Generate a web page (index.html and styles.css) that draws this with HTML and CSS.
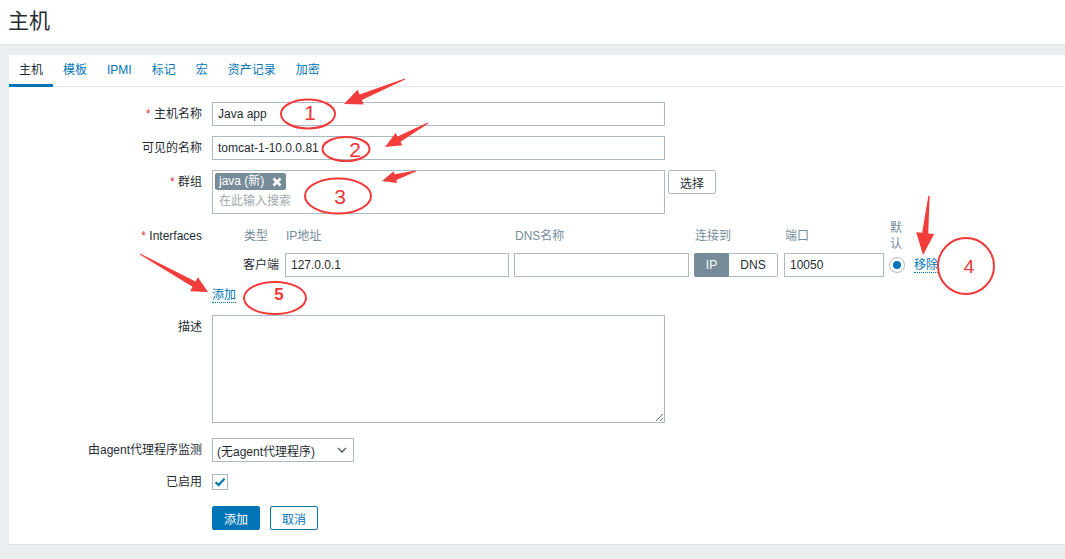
FILE: index.html
```html
<!DOCTYPE html>
<html lang="zh">
<head>
<meta charset="utf-8">
<title>主机</title>
<link rel="stylesheet" href="styles.css">
</head>
<body>
<header class="page-header"><h1 class="page-title">主机</h1></header>
<main class="panel">
  <nav class="tabs">
    <a class="tab tab-active">主机</a>
    <a class="tab">模板</a>
    <a class="tab">IPMI</a>
    <a class="tab">标记</a>
    <a class="tab">宏</a>
    <a class="tab">资产记录</a>
    <a class="tab">加密</a>
  </nav>
  <form class="form">
    <div class="row">
      <label class="label"><span class="req">*</span> 主机名称</label>
      <div class="field"><input class="input input-wide" type="text" value="Java app"></div>
    </div>
    <div class="row row-gap10">
      <label class="label">可见的名称</label>
      <div class="field"><input class="input input-wide" type="text" value="tomcat-1-10.0.0.81"></div>
    </div>
    <div class="row row-gap10">
      <label class="label"><span class="req">*</span> 群组</label>
      <div class="field field-inline">
        <div class="multiselect">
          <span class="tag">java (新)
            <svg class="tag-x" width="10" height="10" viewBox="0 0 10 10"><path d="M1.5 1.5 L8.5 8.5 M8.5 1.5 L1.5 8.5" stroke="#fff" stroke-width="2.6" stroke-linecap="butt"/></svg>
          </span>
          <div class="ms-placeholder">在此输入搜索</div>
        </div>
        <button type="button" class="btn-grey">选择</button>
      </div>
    </div>
    <div class="row row-iface">
      <label class="label label-iface"><span class="req">*</span> Interfaces</label>
      <div class="field">
        <div class="iface">
          <div class="iface-head">类型</div>
          <div class="iface-head">IP地址</div>
          <div class="iface-head">DNS名称</div>
          <div class="iface-head">连接到</div>
          <div class="iface-head">端口</div>
          <div class="iface-head iface-head-default">默认</div>
          <div class="iface-head"></div>

          <div class="iface-type">客户端</div>
          <div><input class="input input-ip" type="text" value="127.0.0.1"></div>
          <div><input class="input input-dns" type="text" value=""></div>
          <div class="toggle"><span class="toggle-ip">IP</span><span class="toggle-dns">DNS</span></div>
          <div><input class="input input-port" type="text" value="10050"></div>
          <div class="radio"><span class="radio-dot"></span></div>
          <div><a class="link link-remove">移除</a></div>
        </div>
      </div>
    </div>
    <div class="row row-add">
      <div class="label"></div>
      <div class="field"><a class="link link-add">添加</a></div>
    </div>
    <div class="row row-desc">
      <label class="label">描述</label>
      <div class="field"><textarea class="textarea"></textarea></div>
    </div>
    <div class="row row-select">
      <label class="label">由agent代理程序监测</label>
      <div class="field">
        <div class="select"><span>(无agent代理程序)</span>
          <svg width="10" height="6" viewBox="0 0 10 6"><path d="M1 1 L5 5 L9 1" fill="none" stroke="#4f5b61" stroke-width="1.3"/></svg>
        </div>
      </div>
    </div>
    <div class="row row-check">
      <label class="label label-check">已启用</label>
      <div class="field">
        <div class="checkbox"><svg width="14" height="14" viewBox="0 0 14 14"><path d="M2.5 7.2 L5.6 10 L11.5 3.8" fill="none" stroke="#0275b8" stroke-width="2.2"/></svg></div>
      </div>
    </div>
    <div class="row row-buttons">
      <div class="label"></div>
      <div class="field field-inline">
        <button type="button" class="btn-primary">添加</button>
        <button type="button" class="btn-secondary">取消</button>
      </div>
    </div>
  </form>
</main>

<svg class="annotations" width="1065" height="559" viewBox="0 0 1065 559">
  <g fill="#f33c3c">
    <polygon points="405.2,79.5 361.8,99.9 363.7,104.6 344,104 357.6,89.8 359.5,94.4 404.8,78.5"/>
    <polygon points="428.2,123.4 400.5,141.8 402.4,145.3 385,147 395.6,133.1 397.5,136.6 427.8,122.6"/>
    <polygon points="416.1,171.5 396.3,180 397.1,182.9 382,181 393.7,171.3 394.6,174.2 415.9,170.5"/>
    <polygon points="929.7,196.1 928.2,233.4 934.2,234 923,255 916.2,232.2 922.2,232.8 928.3,195.9"/>
    <polygon points="139.8,254.4 192.5,286.8 190.1,291.2 208,292 197.9,277.2 195.5,281.6 140.2,253.6"/>
  </g>
  <g fill="none" stroke="#f23a3a" stroke-width="2">
    <ellipse cx="308" cy="114" rx="27" ry="14.5"/>
    <ellipse cx="346" cy="149" rx="23.5" ry="12"/>
    <ellipse cx="338" cy="196" rx="33" ry="17.5"/>
    <circle cx="966" cy="266" r="28"/>
    <ellipse cx="275" cy="298" rx="31" ry="16"/>
  </g>
  <g class="anno-num" fill="#ef3535" text-anchor="middle">
    <text x="310" y="120" font-size="21">1</text>
    <text x="355" y="157" font-size="21">2</text>
    <text x="340" y="204" font-size="21">3</text>
    <text x="969" y="273" font-size="19">4</text>
    <text x="279" y="300" font-size="17" font-weight="bold">5</text>
  </g>
</svg>
</body>
</html>
```

FILE: styles.css
```css
html, body {
  margin: 0;
  padding: 0;
}
body {
  background: #ebeef0;
  font-family: "Liberation Sans", Arial, "Noto Sans CJK SC", sans-serif;
  font-size: 12px;
  color: #1f2c33;
  width: 1065px;
  height: 559px;
  overflow: hidden;
  position: relative;
}

.page-header {
  background: #fff;
  height: 44px;
  border-bottom: 1px solid #dfe4e7;
  padding-left: 8px;
}
.page-title {
  margin: 0;
  font-size: 21px;
  font-weight: normal;
  line-height: 42px;
  color: #1f2c33;
}

.panel {
  margin: 10px 0 0 9px;
  background: #fff;
  border-bottom: 1px solid #dfe4e7;
}

.tabs {
  display: flex;
  height: 31px;
  border-bottom: 1px solid #e6e9eb;
}
.tab {
  display: block;
  height: 32px;
  box-sizing: border-box;
  margin-bottom: -1px;
  padding: 0 10px;
  line-height: 31px;
  color: #0275b8;
  text-decoration: none;
  cursor: pointer;
}
.tab-active {
  color: #1f2c33;
  box-shadow: inset 0 -3px 0 #0275b8;
}

.form {
  padding: 15px 0 14px 0;
}
.row {
  display: grid;
  grid-template-columns: 193px 1fr;
  column-gap: 10px;
}
.row-gap10 { margin-top: 10px; }
.row-iface { margin-top: 6px; }
.row-add { margin-top: 11px; }
.row-desc { margin-top: 12px; }
.row-select { margin-top: 15px; }
.row-check { margin-top: 12px; }
.row-buttons { margin-top: 16px; }

.label {
  text-align: right;
  line-height: 24px;
  white-space: nowrap;
}
.label-iface {
  line-height: 16px;
  padding-top: 8px;
}
.label-check {
  line-height: 16px;
}
.req {
  color: #e33734;
}

.field-inline {
  display: flex;
  align-items: flex-start;
}

.input {
  display: block;
  box-sizing: border-box;
  height: 24px;
  margin: 0;
  border: 1px solid #acbbc2;
  border-radius: 0;
  padding: 0 5px;
  font: inherit;
  color: #1f2c33;
  background: #fff;
  outline: none;
}
.input-wide { width: 453px; }
.input-ip { width: 224px; }
.input-dns { width: 175px; }
.input-port { width: 100px; }

.multiselect {
  box-sizing: border-box;
  width: 453px;
  height: 44px;
  border: 1px solid #acbbc2;
  padding: 2px;
}
.tag {
  display: inline-flex;
  align-items: center;
  gap: 8px;
  height: 17px;
  padding: 0 4px;
  background: #768d99;
  color: #fff;
  border-radius: 2px;
  line-height: 17px;
}
.tag-x {
  display: block;
}
.ms-placeholder {
  padding-left: 4px;
  margin-top: 2px;
  line-height: 18px;
  color: #9ea8ad;
}

.btn-grey {
  margin-left: 3px;
  height: 24px;
  padding: 0 11px;
  background: #fff;
  border: 1px solid #acbbc2;
  border-radius: 2px;
  font: inherit;
  color: #1f2c33;
}

.iface {
  display: grid;
  grid-template-columns: 37px 224px 175px 85px 100px 16px auto;
  column-gap: 5px;
  row-gap: 1px;
  align-items: center;
  padding-left: 31px;
  width: max-content;
}
.iface-head {
  color: #768d99;
  line-height: 16px;
  padding-left: 1px;
}
.iface-head-default {
  width: 16px;
}
.iface-type {
  line-height: 24px;
  white-space: nowrap;
}
.toggle {
  display: flex;
  height: 24px;
}
.toggle-ip, .toggle-dns {
  box-sizing: border-box;
  height: 24px;
  line-height: 22px;
  text-align: center;
}
.toggle-ip {
  width: 35px;
  background: #768d99;
  border: 1px solid #768d99;
  color: #fff;
  border-radius: 2px 0 0 2px;
}
.toggle-dns {
  width: 49px;
  border: 1px solid #acbbc2;
  border-left: none;
  background: #fff;
  color: #1f2c33;
  border-radius: 0 2px 2px 0;
}
.radio {
  box-sizing: border-box;
  width: 16px;
  height: 16px;
  border: 1px solid #acbbc2;
  border-radius: 50%;
  display: flex;
  align-items: center;
  justify-content: center;
}
.radio-dot {
  width: 8px;
  height: 8px;
  border-radius: 50%;
  background: #0275b8;
}

.link {
  color: #0275b8;
  text-decoration: none;
  border-bottom: 1px dotted #0275b8;
  cursor: pointer;
}
.link-remove {
  margin-left: 4px;
  line-height: 14px;
  display: inline-block;
}
.link-add {
  display: inline-block;
  line-height: 14px;
}

.textarea {
  display: block;
  box-sizing: border-box;
  width: 453px;
  height: 108px;
  margin: 0;
  border: 1px solid #acbbc2;
  border-radius: 0;
  padding: 4px 5px;
  font: inherit;
  outline: none;
  background: #fff;
}

.select {
  box-sizing: border-box;
  width: 142px;
  height: 24px;
  border: 1px solid #acbbc2;
  padding: 0 6px 0 4px;
  display: flex;
  align-items: center;
  justify-content: space-between;
  color: #1f2c33;
}

.checkbox {
  box-sizing: border-box;
  width: 16px;
  height: 16px;
  border: 1px solid #acbbc2;
  display: flex;
  align-items: center;
  justify-content: center;
}

.btn-primary, .btn-secondary {
  height: 24px;
  padding: 0 11px;
  border: 1px solid #0275b8;
  border-radius: 2px;
  font: inherit;
}
.btn-primary {
  background: #0275b8;
  color: #fff;
}
.btn-secondary {
  margin-left: 10px;
  background: #fff;
  color: #0275b8;
}

.annotations {
  position: absolute;
  left: 0;
  top: 0;
  pointer-events: none;
}
.anno-num {
  font-family: "Liberation Sans", Arial, sans-serif;
}
```
